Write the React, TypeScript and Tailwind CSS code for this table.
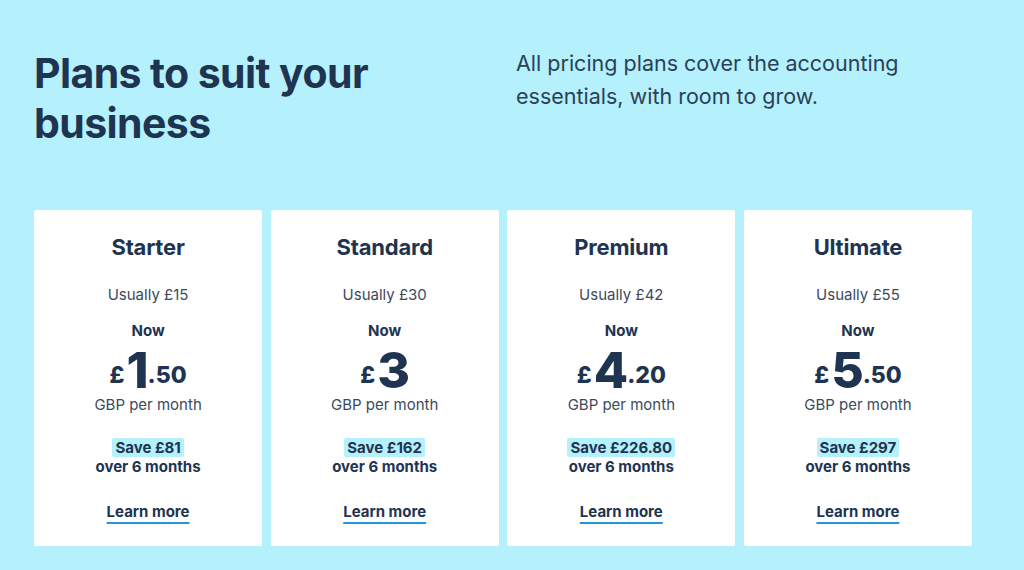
import React from "react";

type Plan = {
	name: string;
	usually: string;
	whole: string;
	pence?: string;
	save: string;
};

const plans: Plan[] = [
	{ name: "Starter", usually: "£15", whole: "1", pence: ".50", save: "£81" },
	{ name: "Standard", usually: "£30", whole: "3", save: "£162" },
	{ name: "Premium", usually: "£42", whole: "4", pence: ".20", save: "£226.80" },
	{ name: "Ultimate", usually: "£55", whole: "5", pence: ".50", save: "£297" },
];

function PlanCard({ plan }: { plan: Plan }) {
	return (
		<div className="bg-white rounded-[2px] h-[336px] flex flex-col items-center text-[#1e3450]">
			<h3 className="mt-[23px] text-[22px] leading-[28px] font-bold tracking-[-0.2px]">{plan.name}</h3>
			<p className="mt-[24px] text-[15px] leading-[20px] text-[#3c4a5c]">Usually {plan.usually}</p>
			<p className="mt-[16px] text-[15px] leading-[20px] font-bold">Now</p>
			<div className="mt-[8px] h-[42px] flex items-end font-extrabold leading-none">
				<span className="text-[23px] mr-[2px] leading-[32px]">£</span>
				<span className="text-[50px] leading-[42px] tracking-[-1px]">{plan.whole}</span>
				{plan.pence && <span className="text-[23px] leading-[32px]">{plan.pence}</span>}
			</div>
			<p className="mt-[4px] text-[15px] leading-[20px] text-[#3c4a5c]">GBP per month</p>
			<div className="mt-[23px] flex flex-col items-center text-[15px] leading-[19px] font-bold">
				<span className="bg-[#b5f0fd] px-[3px] rounded-[2px]">Save {plan.save}</span>
				<span>over 6 months</span>
			</div>
			<a
				href="#"
				className="mt-[26px] text-[15px] leading-[20px] font-bold underline decoration-[#2596dc] decoration-2 underline-offset-[5px]"
			>
				Learn more
			</a>
		</div>
	);
}

export default function App() {
	return (
		<div
			className="w-[1024px] h-[570px] bg-[#b5f0fd] px-[34px] pt-[48px] text-[#1e3450] overflow-hidden"
			style={{ fontFamily: "Inter, 'Noto Sans', sans-serif" }}
		>
			<div className="flex">
				<h1 className="w-[482px] text-[41px] leading-[50px] font-bold tracking-[-0.6px]">
					Plans to suit your
					<br />
					business
				</h1>
				<p className="w-[430px] mt-[-1px] text-[21.5px] leading-[33px] text-[#2a4156]">
					All pricing plans cover the accounting essentials, with room to grow.
				</p>
			</div>
			<div className="mt-[62px] grid grid-cols-4 gap-[8.5px] w-[938px]">
				{plans.map((p) => (
					<PlanCard key={p.name} plan={p} />
				))}
			</div>
		</div>
	);
}
